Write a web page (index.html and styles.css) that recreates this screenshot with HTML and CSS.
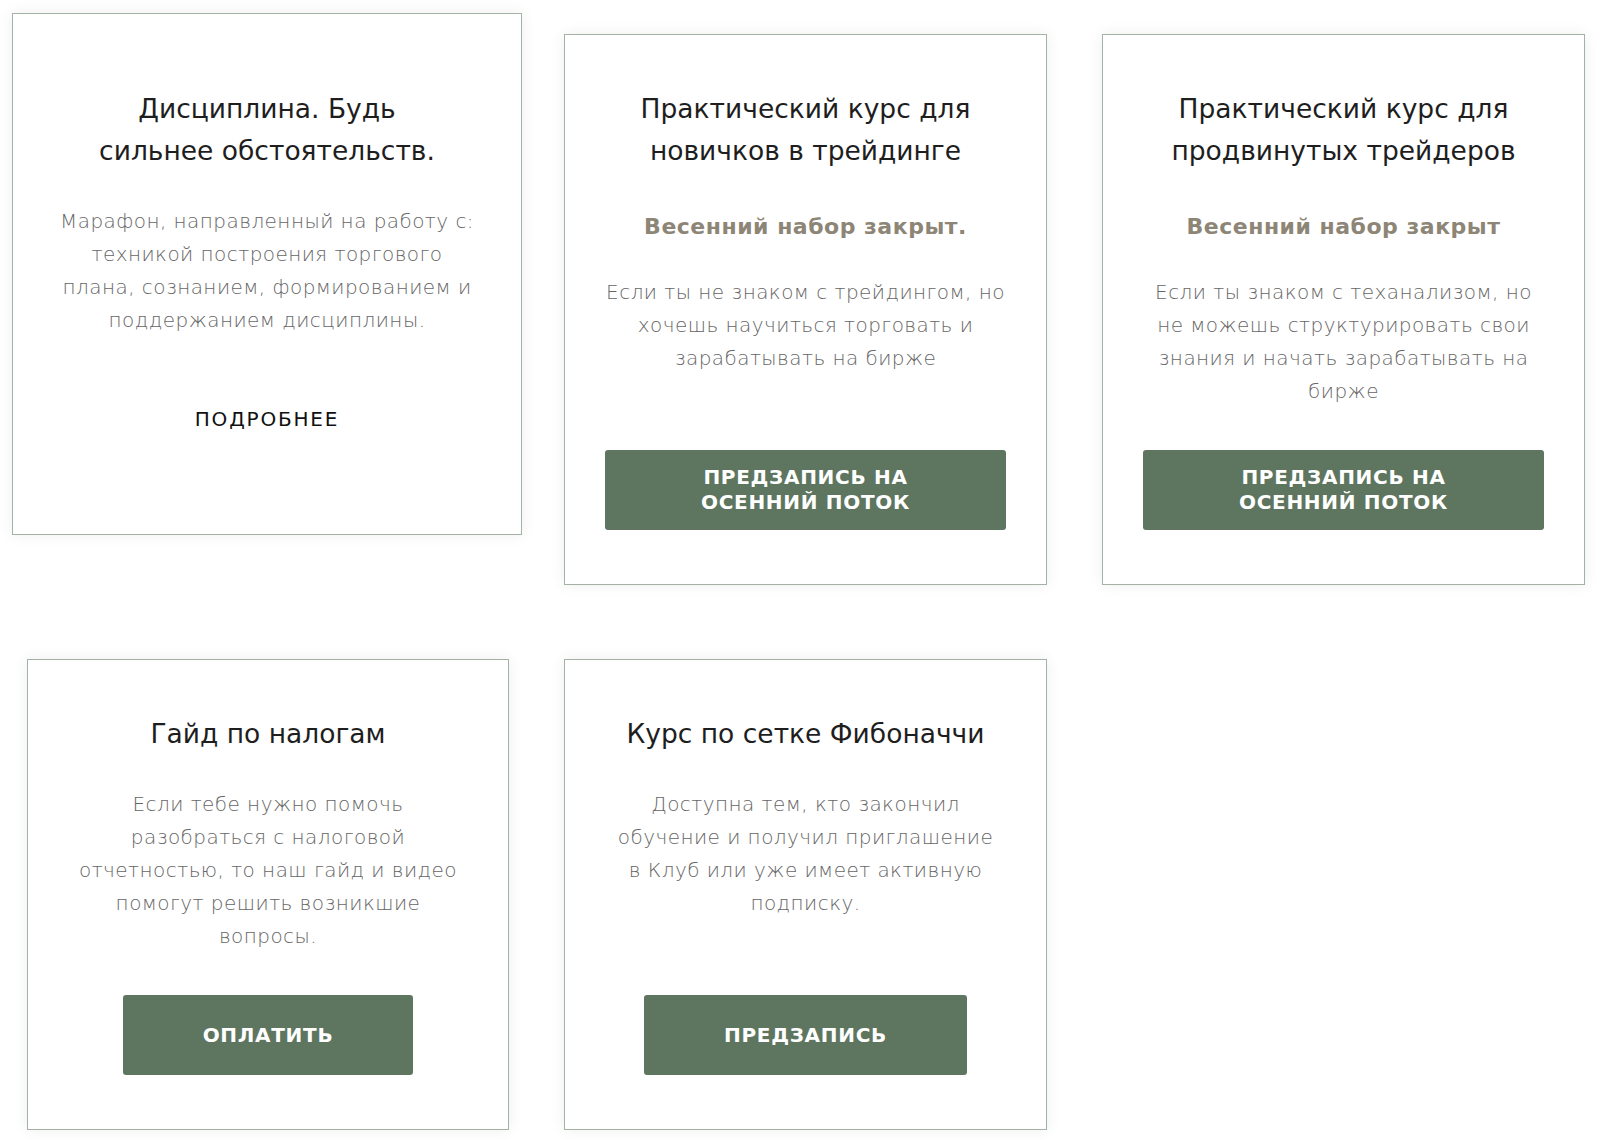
FILE: index.html
```html
<!DOCTYPE html>
<html lang="ru">
<head>
  <meta charset="UTF-8" />
  <meta name="viewport" content="width=device-width, initial-scale=1.0" />
  <title>Курсы</title>
  <link rel="stylesheet" href="styles.css">
</head>
<body>
<div class="catalog">

  <div class="card card-active">
    <h3 class="card-title">Дисциплина. Будь<br>сильнее обстоятельств.</h3>
    <p class="card-text">Марафон, направленный на работу с:<br>техникой построения торгового<br>плана, сознанием, формированием и<br>поддержанием дисциплины.</p>
    <a class="card-more" href="#">ПОДРОБНЕЕ</a>
  </div>

  <div class="card">
    <h3 class="card-title">Практический курс для<br>новичков в трейдинге</h3>
    <div class="card-note">Весенний набор закрыт.</div>
    <p class="card-text">Если ты не знаком с трейдингом, но<br>хочешь научиться торговать и<br>зарабатывать на бирже</p>
    <a class="card-btn" href="#">ПРЕДЗАПИСЬ НА ОСЕННИЙ ПОТОК</a>
  </div>

  <div class="card">
    <h3 class="card-title">Практический курс для<br>продвинутых трейдеров</h3>
    <div class="card-note">Весенний набор закрыт</div>
    <p class="card-text">Если ты знаком с теханализом, но<br>не можешь структурировать свои<br>знания и начать зарабатывать на<br>бирже</p>
    <a class="card-btn" href="#">ПРЕДЗАПИСЬ НА ОСЕННИЙ ПОТОК</a>
  </div>

  <div class="card">
    <h3 class="card-title">Гайд по налогам</h3>
    <p class="card-text">Если тебе нужно помочь<br>разобраться с налоговой<br>отчетностью, то наш гайд и видео<br>помогут решить возникшие<br>вопросы.</p>
    <a class="card-btn" href="#">ОПЛАТИТЬ</a>
  </div>

  <div class="card">
    <h3 class="card-title">Курс по сетке Фибоначчи</h3>
    <p class="card-text">Доступна тем, кто закончил<br>обучение и получил приглашение<br>в Клуб или уже имеет активную<br>подписку.</p>
    <a class="card-btn" href="#">ПРЕДЗАПИСЬ</a>
  </div>

</div>
</body>
</html>
```

FILE: styles.css
```css
* { box-sizing: border-box; margin: 0; padding: 0; }

body {
  font-family: "DejaVu Sans", "Open Sans", sans-serif;
  background: #ffffff;
  color: #1e1e1e;
}

.catalog {
  display: grid;
  grid-template-columns: 482px 483px 483px;
  column-gap: 55px;
  row-gap: 74px;
  padding: 34px 15px 40px 27px;
}

.card {
  display: flex;
  flex-direction: column;
  align-items: center;
  text-align: center;
  padding: 53px 40px 54px;
  background: #ffffff;
  border: 1.5px solid #a3b2a4;
  box-shadow: 0 0 14px rgba(0, 0, 0, 0.07);
}

.card-active {
  align-self: start;
  margin: -21px -13px 0 -15px;
  padding: 74px 40px 75px;
  position: relative;
  z-index: 1;
}

.card-title {
  font-size: 26.5px;
  font-weight: 400;
  line-height: 42px;
  color: #1e1e1e;
  margin-bottom: 33px;
}

.card-note {
  font-size: 22px;
  font-weight: 700;
  line-height: 30px;
  letter-spacing: 0.5px;
  color: #8d8576;
  margin-top: 7px;
  margin-bottom: 34px;
}

.card-text {
  font-size: 20px;
  font-weight: 300;
  line-height: 33px;
  letter-spacing: 0.45px;
  color: #666666;
  margin-bottom: 42px;
}

.card-more {
  display: flex;
  align-items: center;
  height: 80px;
  font-size: 20px;
  font-weight: 400;
  letter-spacing: 1.8px;
  color: #111111;
  text-decoration: none;
}

.card-btn {
  display: flex;
  align-items: center;
  justify-content: center;
  height: 80px;
  max-width: 100%;
  margin-top: auto;
  padding: 0 80px;
  background: #5e7560;
  border-radius: 3px;
  font-size: 20px;
  font-weight: 700;
  line-height: 25px;
  letter-spacing: 0.7px;
  color: #ffffff;
  text-decoration: none;
}
```
